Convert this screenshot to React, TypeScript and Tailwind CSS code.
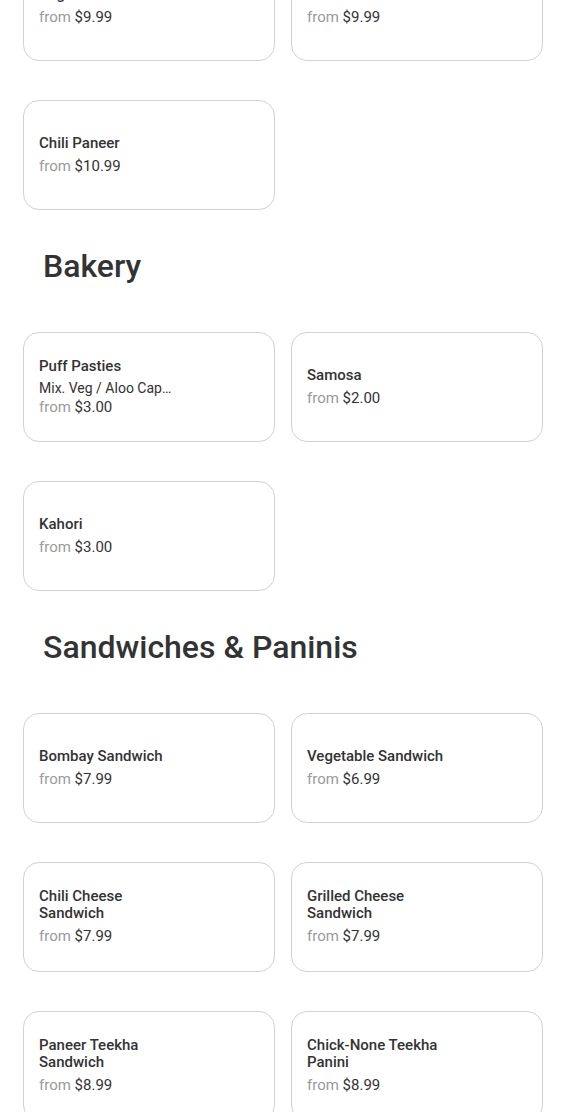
type Item = {
  name: string;
  price: string;
  desc?: string;
};

type Section = {
  title?: string;
  items: Item[];
};

const sections: Section[] = [
  {
    items: [
      { name: 'Veg Manchurian', price: '$9.99' },
      { name: 'Chili Mushroom', price: '$9.99' },
      { name: 'Chili Paneer', price: '$10.99' },
    ],
  },
  {
    title: 'Bakery',
    items: [
      { name: 'Puff Pasties', desc: 'Mix. Veg / Aloo Capsicum / Paneer', price: '$3.00' },
      { name: 'Samosa', price: '$2.00' },
      { name: 'Kahori', price: '$3.00' },
    ],
  },
  {
    title: 'Sandwiches & Paninis',
    items: [
      { name: 'Bombay Sandwich', price: '$7.99' },
      { name: 'Vegetable Sandwich', price: '$6.99' },
      { name: 'Chili Cheese Sandwich', price: '$7.99' },
      { name: 'Grilled Cheese Sandwich', price: '$7.99' },
      { name: 'Paneer Teekha Sandwich', price: '$8.99' },
      { name: 'Chick-None Teekha Panini', price: '$8.99' },
    ],
  },
];

function MenuCard({ item }: { item: Item }) {
  return (
    <div className="h-[110px] rounded-2xl border border-[#d2d2d2] bg-white px-[15px] flex flex-col justify-center">
      <div className="max-w-[138px] text-[15px] leading-[17px] font-medium text-[#333333] mb-1">{item.name}</div>
      {item.desc && (
        <div className="max-w-[136px] truncate text-[14px] leading-[18px] text-[#333333]">{item.desc}</div>
      )}
      <div className="text-[15px] leading-5">
        <span className="text-[#9a9a9a]">from</span> <span className="text-[#333333]">{item.price}</span>
      </div>
    </div>
  );
}

export default function App() {
  return (
    <div className="min-h-screen bg-white overflow-hidden" style={{ fontFamily: 'Roboto, "Liberation Sans", sans-serif' }}>
      <div className="mt-[-49px] ml-[23px] w-[520px] pb-10">
        {sections.map((section, idx) => (
          <div key={idx}>
            {section.title && (
              <h2 className="mt-9 mb-[46px] pl-5 text-[32px] leading-10 font-medium text-[#333333]">{section.title}</h2>
            )}
            <div className="grid grid-cols-2 gap-x-4 gap-y-[39px]">
              {section.items.map((item) => (
                <MenuCard key={item.name} item={item} />
              ))}
            </div>
          </div>
        ))}
      </div>
    </div>
  );
}
